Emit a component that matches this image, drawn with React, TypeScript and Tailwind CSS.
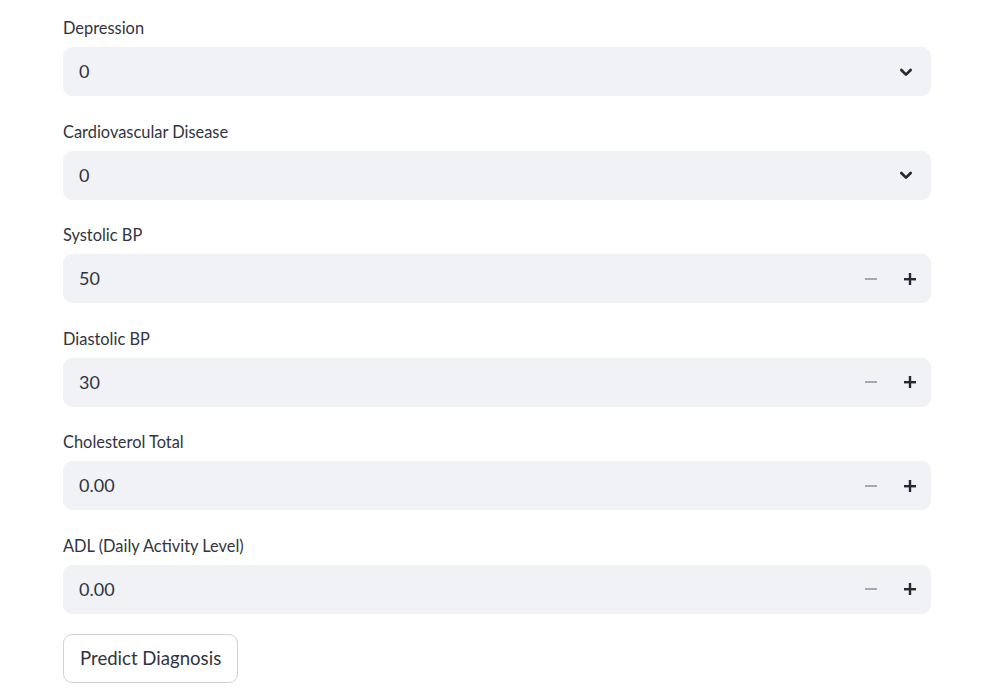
const font = { fontFamily: '"Lato", "Noto Sans", sans-serif' };

function Chevron() {
  return (
    <svg width="16" height="16" viewBox="0 0 24 24" fill="none" stroke="#262730" strokeWidth="4" strokeLinecap="round" strokeLinejoin="round">
      <path d="M5 9l7 7 7-7" />
    </svg>
  );
}

function SelectField({ label, value }: { label: string; value: string }) {
  return (
    <div className="flex flex-col">
      <div className="h-[20px] leading-[20px] text-[16.4px] text-[#31333f]">{label}</div>
      <div className="mt-[9px] h-[49px] rounded-[9px] bg-[#f0f2f6] flex items-center justify-between pl-[16px] pr-[17px]">
        <span className="text-[18px] text-[#31333f]">{value}</span>
        <Chevron />
      </div>
    </div>
  );
}

function NumberField({ label, value }: { label: string; value: string }) {
  return (
    <div className="flex flex-col">
      <div className="h-[20px] leading-[20px] text-[16.4px] text-[#31333f]">{label}</div>
      <div className="mt-[9px] h-[49px] rounded-[9px] bg-[#f0f2f6] flex items-center pl-[16px]">
        <span className="flex-1 text-[18px] text-[#31333f]">{value}</span>
        <div className="w-[39px] h-full flex items-center justify-center">
          <svg width="12" height="12" viewBox="0 0 12 12">
            <rect x="0" y="5" width="12" height="2" fill="#a3a8b4" />
          </svg>
        </div>
        <div className="w-[39px] mr-[2px] h-full flex items-center justify-center">
          <svg width="12" height="12" viewBox="0 0 12 12">
            <rect x="0" y="5" width="12" height="2.4" fill="#262730" />
            <rect x="4.8" y="0" width="2.4" height="12" fill="#262730" />
          </svg>
        </div>
      </div>
    </div>
  );
}

export default function App() {
  return (
    <div className="w-[1000px] h-[695px] bg-white overflow-hidden" style={font}>
      <div className="ml-[63px] w-[868px] pt-[18px] flex flex-col gap-[25.6px]">
        <SelectField label="Depression" value="0" />
        <SelectField label="Cardiovascular Disease" value="0" />
        <NumberField label="Systolic BP" value="50" />
        <NumberField label="Diastolic BP" value="30" />
        <NumberField label="Cholesterol Total" value="0.00" />
        <NumberField label="ADL (Daily Activity Level)" value="0.00" />
        <div className="-mt-[5.6px]">
          <button className="h-[49px] px-[16px] rounded-[9px] border border-[#d0d2d8] bg-white text-[18.6px] text-[#31333f]">
            Predict Diagnosis
          </button>
        </div>
      </div>
    </div>
  );
}
